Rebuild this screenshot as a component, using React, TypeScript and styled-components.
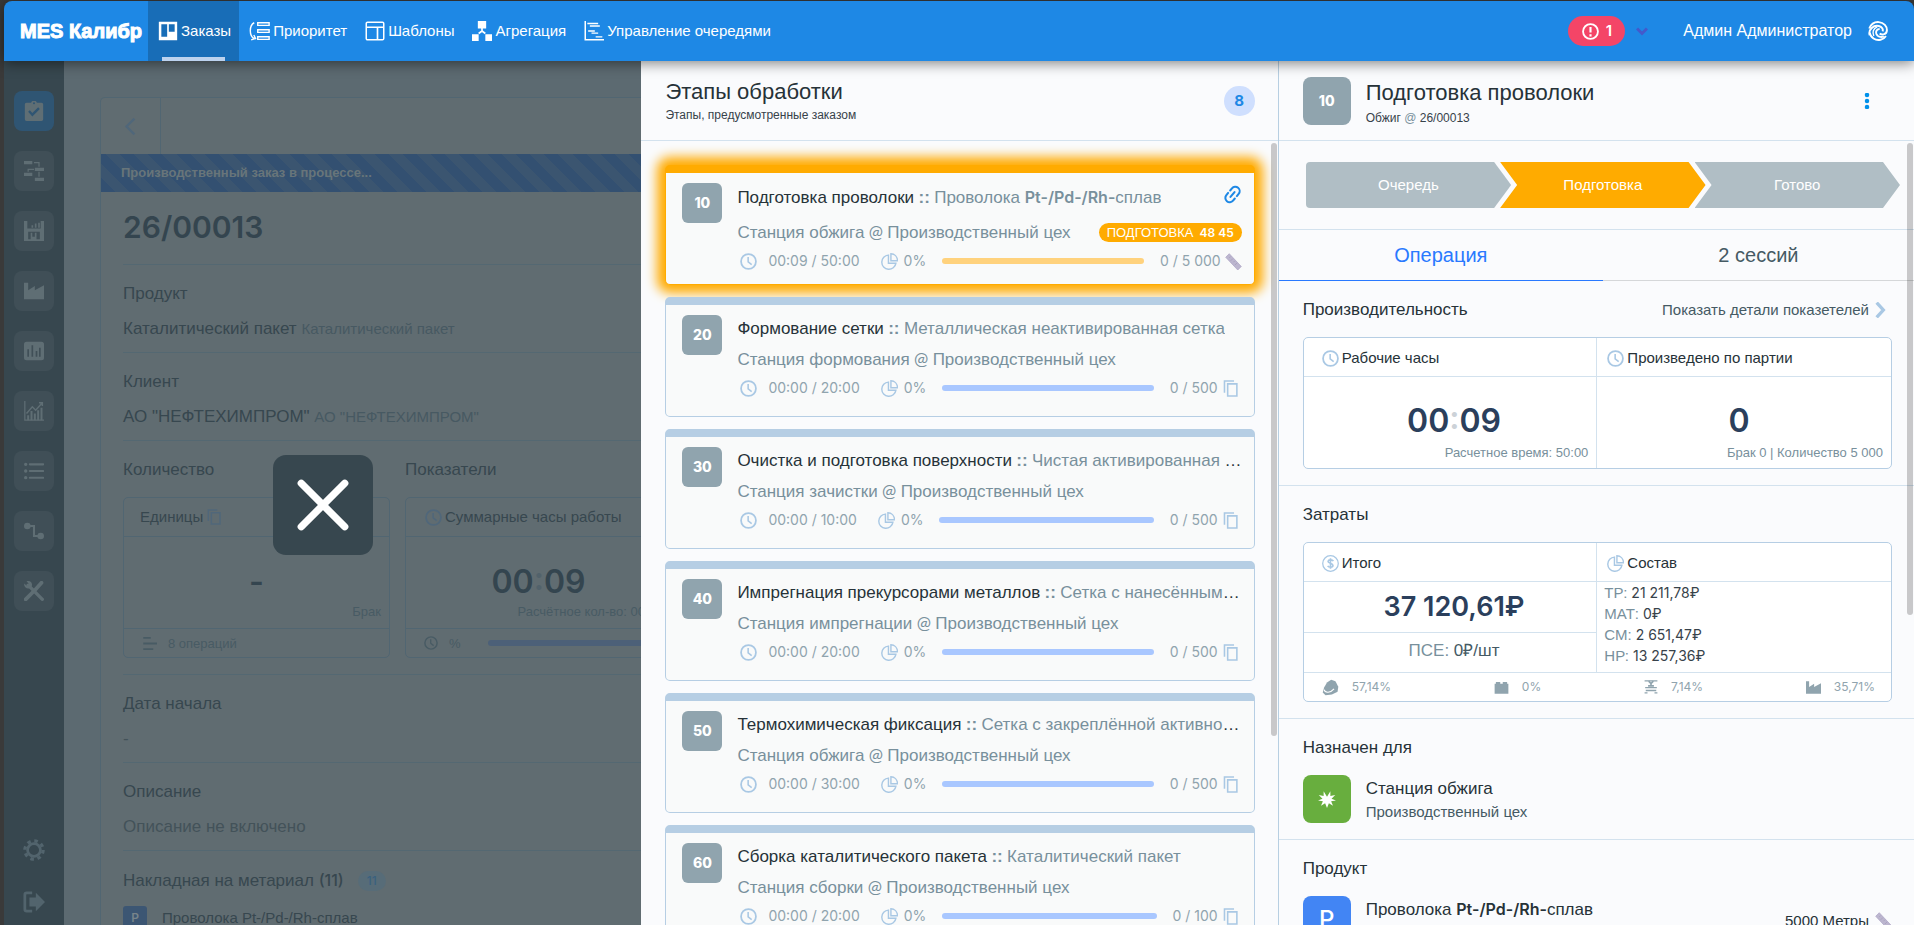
import React from "react";
import styled, { createGlobalStyle, css } from "styled-components";

const SANS = '"Liberation Sans", Arial, sans-serif';
const NUM = 'Inter, "Liberation Sans", sans-serif';

const GlobalStyle = createGlobalStyle`
  *, *::before, *::after { box-sizing: border-box; }
  html, body { margin: 0; height: 100%; }
  body { background: #3a3a3a; font-family: ${SANS}; color: #263238; overflow: hidden; }
  h1, h2, h3, p, ul, dl, dd { margin: 0; padding: 0; }
  h1, h2, h3 { font-weight: 400; }
  ul { list-style: none; }
  button { font-family: inherit; padding: 0; border: 0; background: none; color: inherit; cursor: pointer; }
  a { color: inherit; text-decoration: none; }
  svg { display: block; flex: none; }
`;

/* ---------- icons ---------- */

type IconProps = { size?: number; color?: string };

const Svg = ({ size = 20, color = "currentColor", children }: IconProps & { children: React.ReactNode }) => (
  <svg width={size} height={size} viewBox="0 0 24 24" fill="none" stroke={color} strokeWidth="2" aria-hidden="true">
    {children}
  </svg>
);

const solid = (color?: string) => ({ fill: color ?? "currentColor", stroke: "none" });

const BoardIcon = ({ size, color }: IconProps) => (
  <Svg size={size} color={color}>
    <path
      {...solid(color)}
      fillRule="evenodd"
      d="M1 1h22v22H1zM4 4v15h7V4zM13 4v9h7V4z"
    />
  </Svg>
);
const PriorityIcon = ({ size, color }: IconProps) => (
  <Svg size={size} color={color}>
    <path d="M10 2h13v3H10zM10 10h13v3H10zM10 18h13v3H10z" strokeWidth="1.6" />
    <path d="M6 2C0 5 0 17 6 20M2.500 21.500l5-1.500-2-4" strokeWidth="1.6" />
  </Svg>
);
const TemplateIcon = ({ size, color }: IconProps) => (
  <Svg size={size} color={color}>
    <rect x="1.500" y="1.500" width="21" height="21" rx="1.500" strokeWidth="1.8" />
    <path d="M2 7.500h20M15 7.500v15" strokeWidth="2" />
  </Svg>
);
const AggregationIcon = ({ size, color }: IconProps) => (
  <Svg size={size} color={color}>
    <path {...solid(color)} d="M7 0h10v9H7zM0 16h8v8H0zM16 16h8v8h-8z" />
    <path d="M12 8v4L8 15M12 12l4 3" strokeWidth="2" />
  </Svg>
);
const GanttIcon = ({ size, color }: IconProps) => (
  <Svg size={size} color={color}>
    <path d="M1.500 0v22.500H24" strokeWidth="1.8" />
    <path d="M4 3h13M7 6h12M5 12h8M9 14.500h8M14 19h8" strokeWidth="1.6" />
  </Svg>
);
const AlertIcon = ({ size, color }: IconProps) => (
  <Svg size={size} color={color}>
    <circle cx="12" cy="12" r="10.500" strokeWidth="2.600" />
    <path d="M12 5.500v8M12 16v3" strokeWidth="3" />
  </Svg>
);
const SwirlIcon = ({ size, color }: IconProps) => (
  <Svg size={size} color={color}>
    <path d="M1.500 9C4 3 9 1 13 1.300c6 .5 10 5 9.700 10C22.500 16 17 17.500 14 15" strokeWidth="2.300" />
    <path d="M2 17C0 10 7 4.500 13 6c4 1 5.500 4 4.500 6.500" strokeWidth="2.300" />
    <path d="M2 14c1 6 7 10 13 8.500 3-.7 5-2 6.500-4.500" strokeWidth="2.300" />
    <path d="M14 9.500c-3.500 0-5 3-4 6 1.200 3 5 4.500 9 3" strokeWidth="2.300" />
    <path d="M11 7C6 9 5 14 7 18" strokeWidth="1.600" />
  </Svg>
);
const ChevronDownIcon = ({ size, color }: IconProps) => (
  <Svg size={size} color={color}>
    <path d="M2 7l10 10L22 7" strokeWidth="6" />
  </Svg>
);
const ClipboardIcon = ({ size, color }: IconProps) => (
  <Svg size={size} color={color}>
    <path
      {...solid(color)}
      fillRule="evenodd"
      d="M3 2h5.500a3.700 3.700 0 0 1 7 0H21a2 2 0 0 1 2 2v18a2 2 0 0 1-2 2H3a2 2 0 0 1-2-2V4a2 2 0 0 1 2-2zM12 1.500a1.200 1.200 0 1 0 0 2.400 1.200 1.200 0 0 0 0-2.400zM5 13l5 5.500 9-9-2-2-7 7-3-3.500z"
    />
  </Svg>
);
const FlowIcon = ({ size, color }: IconProps) => (
  <Svg size={size} color={color}>
    <path {...solid(color)} d="M0 0h10v4H0zM13 8h11v4H13zM0 14h10v4H0zM13 20h11v4H13z" />
    <path d="M12 2h6v5M12 10H5v3M18 13v6" strokeWidth="1.500" />
  </Svg>
);
const SaveIcon = ({ size, color }: IconProps) => (
  <Svg size={size} color={color}>
    <path
      {...solid(color)}
      fillRule="evenodd"
      d="M0 0h4v9h16V0h4v24H0zM5 13v9h14v-9zM9 8V5h2v3zM13 8V3h2v5zM17 8V2h2v6zM8 14h2v5h3v-5h2v8H8z"
    />
  </Svg>
);
const FactoryIcon = ({ size, color }: IconProps) => (
  <Svg size={size} color={color}>
    <path {...solid(color)} d="M0 2h5v9l8-5v5l11-6v17H0z" />
  </Svg>
);
const ChartBoxIcon = ({ size, color }: IconProps) => (
  <Svg size={size} color={color}>
    <path
      {...solid(color)}
      fillRule="evenodd"
      d="M3 1h18a3 3 0 0 1 3 3v16a3 3 0 0 1-3 3H3a3 3 0 0 1-3-3V4a3 3 0 0 1 3-3zM4 10v9h2v-9zM9 5v14h2V5zM14 12v7h2v-7zM18 8v11h2V8z"
    />
  </Svg>
);
const TrendIcon = ({ size, color }: IconProps) => (
  <Svg size={size} color={color}>
    <path d="M1 0v23h23" strokeWidth="1.500" />
    <path d="M3 15l7-8 4 4 8-9M18 2h4v4" strokeWidth="1.800" />
    <path d="M5 23v-6M9 23V12M13 23v-8M17 23V11M21 23V8" strokeWidth="2.400" />
  </Svg>
);
const ListIcon = ({ size, color }: IconProps) => (
  <Svg size={size} color={color}>
    <path d="M7 4h16M7 12h16M7 20h16" strokeWidth="2.500" strokeLinecap="round" />
    <path d="M2 4h.1M2 12h.1M2 20h.1" strokeWidth="4" strokeLinecap="round" />
  </Svg>
);
const RouteIcon = ({ size, color }: IconProps) => (
  <Svg size={size} color={color}>
    <path d="M4 6h8v12h8" strokeWidth="2.500" />
    <circle cx="4" cy="6" r="4" {...solid(color)} />
    <circle cx="20" cy="18" r="4" {...solid(color)} />
  </Svg>
);
const ToolsIcon = ({ size, color }: IconProps) => (
  <Svg size={size} color={color}>
    <path d="M5 5l17 17" strokeWidth="4" strokeLinecap="round" />
    <path d="M2 22L15 9M13 11l8-9" strokeWidth="4.500" strokeLinecap="round" />
    <path {...solid(color)} d="M0 3l4 3 2-2-3-4c5-1 8 3 6 7-3 4-9 2-9-4z" />
  </Svg>
);
const GearIcon = ({ size, color }: IconProps) => (
  <Svg size={size} color={color}>
    <circle cx="12" cy="12" r="7" strokeWidth="3" />
    <circle cx="12" cy="12" r="10" strokeWidth="3.500" strokeDasharray="3.900 3.954" />
  </Svg>
);
const ExitIcon = ({ size, color }: IconProps) => (
  <Svg size={size} color={color}>
    <path d="M10 2H4a2 2 0 0 0-2 2v16a2 2 0 0 0 2 2h6" strokeWidth="3" />
    <path {...solid(color)} d="M7 7h7V2l10 10-10 10v-5H7z" />
  </Svg>
);
const BackIcon = ({ size, color }: IconProps) => (
  <Svg size={size} color={color}>
    <path d="M17 2L7 12l10 10" strokeWidth="3" />
  </Svg>
);
const CopyIcon = ({ size, color }: IconProps) => (
  <Svg size={size} color={color}>
    <path d="M8 5.500h13v17H8z" strokeWidth="2.200" />
    <path d="M3.500 18V1.500H17" strokeWidth="2.200" />
  </Svg>
);
const ClockIcon = ({ size, color }: IconProps) => (
  <Svg size={size} color={color}>
    <circle cx="12" cy="12" r="10.500" strokeWidth="2.500" />
    <path d="M11.500 5.500v7l5 4" strokeWidth="2.200" />
  </Svg>
);
const PieIcon = ({ size, color }: IconProps) => (
  <Svg size={size} color={color}>
    <path d="M10.500 3A10 10 0 1 0 21 14.500H10.500z" strokeWidth="2" />
    <path d="M14 1v10h9.500C23 5 19 1 14 1z" strokeWidth="2" />
  </Svg>
);
const CoinIcon = ({ size, color }: IconProps) => (
  <Svg size={size} color={color}>
    <circle cx="12" cy="12" r="11" strokeWidth="1.800" />
    <path d="M16 8.500C15 6.500 9 6 8.500 9c-.3 3 7 2.500 7 5.800 0 3.200-6 3-7.500.5M12 4.500v15" strokeWidth="2.300" />
  </Svg>
);
const LinesIcon = ({ size, color }: IconProps) => (
  <Svg size={size} color={color}>
    <path d="M2 3h12M2 12h22M2 21h16" strokeWidth="3" />
  </Svg>
);
const RulerIcon = ({ size }: IconProps) => (
  <Svg size={size}>
    <path d="M6 1l17 18-5 5L1 6z" fill="#bcb6cf" stroke="#aca3c4" strokeWidth="1" />
    <path d="M8 5l-2 2M11 8l-3 3M14 11l-2 2M17 14l-3 3" stroke="#a49cba" strokeWidth="1" />
  </Svg>
);
const LinkIcon = ({ size, color }: IconProps) => (
  <Svg size={size} color={color}>
    <g transform="rotate(-50 12 12)" strokeWidth="2.600" strokeLinecap="round">
      <path d="M10 6.500H6.500a5.500 5.500 0 0 0 0 11H10M14 6.500h3.500a5.500 5.500 0 0 1 0 11H14M8 12h8" />
    </g>
  </Svg>
);
const CloseIcon = ({ size, color }: IconProps) => (
  <Svg size={size} color={color}>
    <path d="M3 3l18 18M21 3L3 21" strokeWidth="3" strokeLinecap="round" />
  </Svg>
);
const DotsIcon = ({ size, color }: IconProps) => (
  <Svg size={size} color={color}>
    <g {...solid(color)}>
      <circle cx="12" cy="3" r="3.400" />
      <circle cx="12" cy="12" r="3.400" />
      <circle cx="12" cy="21" r="3.400" />
    </g>
  </Svg>
);
const ForwardIcon = ({ size, color }: IconProps) => (
  <Svg size={size} color={color}>
    <path d="M7 1l10 11L7 23" strokeWidth="5" />
  </Svg>
);
const OreIcon = ({ size, color }: IconProps) => (
  <Svg size={size} color={color}>
    <path {...solid(color)} d="M7 5l6-4 6 2 4 8-1 7-8 4-9 1-4-4 2-7z" />
    <path d="M3 15c1 5 9 5 14-1" stroke="#fff" strokeWidth="1.500" />
  </Svg>
);
const BrickIcon = ({ size, color }: IconProps) => (
  <Svg size={size} color={color}>
    <path {...solid(color)} d="M1 6h2V3h7v3h4V3h7v3h2v16H1z" />
  </Svg>
);
const MachineIcon = ({ size, color }: IconProps) => (
  <Svg size={size} color={color}>
    <path d="M1 1.500h22M2 13h20M1 22h5M18 22h5" strokeWidth="2.400" />
    <path d="M8 2l4 4 4-4M12 5v5M7 10h10M3 18h18" strokeWidth="2.800" />
  </Svg>
);
const BurstIcon = ({ size, color }: IconProps) => (
  <Svg size={size} color={color}>
    <path
      {...solid(color)}
      d="M12 9L16.500 1.500 16.500 8 23 6.500 18 11.500 24 14 17.500 15 20 21 14.500 17.500 12 24 9.500 17.500 4 21 6.500 15 0 14 6 11.500 1 6.500 7.500 8 7.500 1.500z"
    />
  </Svg>
);

/* ---------- shell ---------- */

const Shell = styled.div`
  position: relative;
  display: flex;
  flex-direction: column;
  height: 100vh;
  margin-left: 4px;
  padding-top: 1px;
`;

const TopBar = styled.header`
  position: relative;
  z-index: 3;
  flex: none;
  display: flex;
  height: 60px;
  color: #fff;
  background: #1e88e5;
  border-radius: 8px 8px 0 0;
  box-shadow: 0 2px 14px rgba(0, 0, 0, 0.5);
`;

const Brand = styled.a`
  display: flex;
  align-items: center;
  width: 144px;
  padding-left: 16px;
  font: 700 20px/30px ${SANS};
  white-space: nowrap;
  -webkit-text-stroke: 1px #fff;
`;

const Nav = styled.nav`
  display: flex;
  flex: 1;
`;

const NavLink = styled.a<{ $active?: boolean }>`
  position: relative;
  display: flex;
  align-items: center;
  gap: 3px;
  padding: 0 8px 0 10px;
  font-size: 15px;
  line-height: 20px;
  white-space: nowrap;
  ${(p) =>
    p.$active &&
    css`
      background: #186db7;
      &::after {
        content: "";
        position: absolute;
        left: 14px;
        right: 14px;
        bottom: 0;
        height: 4px;
        background: #bcd2ee;
      }
    `}
`;

const AlertPill = styled.button`
  display: flex;
  align-items: center;
  justify-content: center;
  gap: 7px;
  width: 57px;
  height: 30px;
  border-radius: 15px;
  color: #fff;
  background: #f44567;
  font: 600 15px/20px ${NUM};
`;

const Account = styled.div`
  display: flex;
  align-items: center;
  padding-right: 26px;
  font-size: 16px;
`;

const AlertMenu = styled.button`
  margin: 0 35px 0 11px;
`;

const AccountName = styled.span`
  margin-right: 16px;
`;

const Body = styled.div`
  position: relative;
  flex: 1;
  min-height: 0;
  display: flex;
  background: #5c6a71;
`;

const SideBar = styled.aside`
  flex: none;
  display: flex;
  flex-direction: column;
  align-items: center;
  gap: 20px;
  width: 60px;
  padding: 30px 0 12px;
  background: #37474f;
`;

const SideButton = styled.button<{ $active?: boolean }>`
  display: flex;
  flex: none;
  align-items: center;
  justify-content: center;
  width: 40px;
  height: 40px;
  border-radius: 8px;
  color: #5f6e74;
  background: ${(p) => (p.$active ? "#2f5573" : "#404f57")};
`;

const SideFooter = styled.div`
  display: flex;
  flex-direction: column;
  gap: 30px;
  margin-top: auto;
  color: #52646d;
`;

/* ---------- order page ---------- */

const OrderPage = styled.main`
  flex: 1;
  min-width: 0;
  padding: 36px 36px 0;
  overflow: hidden;
  color: #37474f;
`;

const OrderCard = styled.article`
  min-height: 100%;
  border: 1px solid #516672;
  border-bottom: 0;
  border-radius: 5px 5px 0 0;
  background: #606c71;
`;

const BackButton = styled.button`
  display: flex;
  align-items: center;
  justify-content: center;
  width: 60px;
  height: 56px;
  border-right: 1px solid #516672;
  color: #50677a;
`;

const StatusBar = styled.p`
  padding: 0 20px;
  font: 700 13px/38px ${SANS};
  color: #68757a;
  background: repeating-linear-gradient(45deg, #335071 0 10px, #3b5570 10px 20px);
`;

const OrderNumber = styled.h1`
  padding: 17px 0 19px;
  font: 600 30px/36px ${NUM};
  color: #34454f;
`;

const OrderBody = styled.div`
  padding: 0 22px;
`;

const OrderSection = styled.section`
  padding: 18px 0 12px;
  border-top: 1px solid #546872;
`;

const OrderHeading = styled.h2`
  display: flex;
  align-items: center;
  gap: 14px;
  font-size: 17px;
  line-height: 22px;
`;

const HeadingCount = styled.span`
  font: 500 16px/22px ${NUM};
`;

const OrderValue = styled.p<{ $soft?: boolean }>`
  margin-top: 13px;
  font-size: 17px;
  line-height: 22px;
  color: ${(p) => (p.$soft ? "#435259" : "inherit")};
`;

const Faded = styled.span`
  font-size: 15px;
  color: #475962;
`;

const Indicators = styled.div`
  display: flex;
  gap: 15px;
  padding-bottom: 4px;
`;

const Indicator = styled.div`
  flex: none;
  width: 267px;
`;

const DimCard = styled.div`
  margin-top: 16px;
  border: 1px solid #516672;
  border-radius: 5px;
`;

const DimHead = styled.h3`
  display: flex;
  align-items: center;
  gap: 3px;
  padding: 0 16px;
  font-size: 15px;
  line-height: 38px;
  border-bottom: 1px solid #516672;
  svg:first-child {
    margin-left: 3px;
  }
`;

const DimBody = styled.div`
  padding: 27px 8px 5px;
  text-align: right;
  font-size: 13px;
  line-height: 22px;
  color: #485b64;
`;

const DimFigure = styled.p`
  margin-bottom: 2px;
  font: 600 32px/35px ${NUM};
  color: #34454f;
  text-align: center;
`;

const DimFoot = styled.div`
  display: flex;
  align-items: center;
  gap: 11px;
  height: 29px;
  padding: 0 18px;
  font-size: 13px;
  color: #485b64;
  border-top: 1px solid #516672;
`;

const DimBar = styled.div`
  flex: 1;
  height: 6px;
  margin-left: 16px;
  border-radius: 3px;
  background: #4c6078;
`;

const CountTag = styled.span`
  padding: 0 9px;
  border-radius: 10px;
  font: 500 12px/20px ${NUM};
  color: #3a617f;
  background: #576c78;
`;

const MaterialRow = styled.div`
  display: flex;
  align-items: center;
  gap: 15px;
  margin-top: 14px;
  font-size: 15px;
  line-height: 24px;
`;

const MaterialBadge = styled.span`
  width: 24px;
  border-radius: 3px;
  font: 600 12px/24px ${NUM};
  text-align: center;
  color: #78848a;
  background: #3c5673;
`;

/* ---------- drawer ---------- */

const CloseLayer = styled.div`
  position: absolute;
  inset: 0 66.63% 0 0;
  display: flex;
  align-items: center;
  justify-content: center;
  padding-top: 24px;
`;

const CloseButton = styled.button`
  display: flex;
  align-items: center;
  justify-content: center;
  width: 100px;
  height: 100px;
  border-radius: 13px;
  color: #fff;
  background: #37474f;
`;

const Drawer = styled.div`
  position: absolute;
  inset: 0 0 0 auto;
  width: 66.63%;
  display: grid;
  grid-template-columns: calc(50% + 1px) minmax(0, 1fr);
  background: #fafbfd;
`;

const Column = styled.section`
  position: relative;
  min-width: 0;
  min-height: 0;
  display: flex;
  flex-direction: column;
  &:first-child {
    border-right: 1px solid #b7cfe2;
  }
`;

const ColumnHeader = styled.header`
  flex: none;
  display: flex;
  align-items: center;
  height: 80px;
  padding: 0 23px 0 24px;
  border-bottom: 1px solid #d3e2ee;
`;

const HeaderText = styled.div`
  flex: 1;
  padding-top: 3px;
`;

const DetailTitle = styled.div`
  flex: 1;
  display: grid;
  gap: 2px;
  padding: 6px 0 0 15px;
`;

const ColumnTitle = styled.h2`
  font-size: 22px;
  line-height: 26px;
  color: #263238;
`;

const ColumnSub = styled.p`
  font-size: 12px;
  line-height: 20px;
  color: #37424a;
`;

const Accent = styled.span`
  color: #78909c;
`;

const Total = styled.span`
  width: 31px;
  border-radius: 16px;
  font: 700 15px/30px ${NUM};
  text-align: center;
  color: #1e88e5;
  background: #cfdffe;
`;

const Scroller = styled.div<{ $pad: string }>`
  flex: 1;
  min-height: 0;
  overflow: hidden;
  padding: ${(p) => p.$pad};
`;

const Thumb = styled.span<{ $length: string }>`
  position: absolute;
  z-index: 1;
  top: 82px;
  right: 1px;
  width: 6px;
  height: ${(p) => p.$length};
  border-radius: 3px;
  background: rgba(0, 0, 0, 0.2);
`;

const StageList = styled.ul`
  display: flex;
  flex-direction: column;
  gap: 12px;
`;

const StageCard = styled.li<{ $current?: boolean }>`
  display: flex;
  gap: 15px;
  height: 120px;
  padding: 10px 12px 0 16px;
  border: 1px solid #b6cee4;
  border-top-width: 8px;
  border-radius: 5px;
  background: #f9fafa;
  ${(p) =>
    p.$current &&
    css`
      border-color: #ffab00;
      box-shadow: 0 0 12px 8px #ffab00;
    `}
`;

const NumberBadge = styled.span<{ $large?: boolean; $bg?: string }>`
  flex: none;
  display: flex;
  align-items: center;
  justify-content: center;
  width: ${(p) => (p.$large ? 48 : 40)}px;
  height: ${(p) => (p.$large ? 48 : 40)}px;
  border-radius: ${(p) => (p.$large ? 8 : 6)}px;
  font: 800 14px/20px ${NUM};
  color: #fff;
  background: ${(p) => p.$bg ?? "#90a4ae"};
`;

const StageInfo = styled.div`
  flex: 1;
  min-width: 0;
`;

const StageTitleRow = styled.div<{ $tall?: boolean }>`
  display: flex;
  justify-content: space-between;
  height: ${(p) => (p.$tall ? 38 : 33)}px;
  padding-top: ${(p) => (p.$tall ? 2 : 1)}px;
`;

const StageTitle = styled.h3`
  overflow: hidden;
  font-size: 17px;
  line-height: 24px;
  white-space: nowrap;
  text-overflow: ellipsis;
`;

const StagePlace = styled.p`
  display: flex;
  align-items: center;
  justify-content: space-between;
  font-size: 17px;
  line-height: 22px;
  white-space: pre;
  color: #78909c;
`;

const Lat = styled.span`
  font-family: Lato, ${SANS};
`;

const Strong = styled.strong`
  font-family: ${NUM};
  font-size: 16px;
  font-weight: 600;
`;

const StatePill = styled.span`
  display: flex;
  align-items: center;
  gap: 6px;
  padding: 0 8px;
  border-radius: 10px;
  font-size: 13px;
  line-height: 19px;
  color: #fff;
  background: #ffab00;
`;

const PillCount = styled.span`
  font: 600 12px/19px ${NUM};
`;

const StageMeta = styled.div<{ $current?: boolean }>`
  display: flex;
  align-items: center;
  height: 20px;
  margin-top: 7px;
  margin-right: ${(p) => (p.$current ? 0 : 3)}px;
  padding-left: 3px;
  font: 400 14px/20px ${NUM};
  color: #90a4ae;
  white-space: nowrap;
`;

const MetaTime = styled.span`
  margin: 0 21px 0 11px;
`;

const MetaShare = styled.span`
  margin-left: 6px;
`;

const MetaQty = styled.span`
  margin-right: 4px;
`;

const Progress = styled.div<{ $current?: boolean }>`
  flex: 1;
  height: 6px;
  margin: 0 16px 0 16px;
  border-radius: 3px;
  background: ${(p) => (p.$current ? "#ffd27d" : "#a9c7ff")};
`;

/* ---------- operation details ---------- */

const MenuButton = styled.button`
  padding: 8px;
  margin-right: 8px;
`;

const Steps = styled.ol`
  display: flex;
  margin: 0;
  padding: 21px 14px 21px 27px;
  list-style: none;
`;

const Step = styled.li<{ $first?: boolean; $on?: boolean }>`
  flex: 1;
  margin-left: ${(p) => (p.$first ? 0 : -11)}px;
  font-size: 15px;
  line-height: 46px;
  text-align: center;
  color: #fff;
  background: ${(p) => (p.$on ? "#ffab00" : "#b0bec5")};
  border-radius: ${(p) => (p.$first ? "4px 0 0 4px" : "0")};
  clip-path: ${(p) =>
    p.$first
      ? "polygon(0 0, calc(100% - 17px) 0, 100% 50%, calc(100% - 17px) 100%, 0 100%)"
      : "polygon(0 0, calc(100% - 17px) 0, 100% 50%, calc(100% - 17px) 100%, 0 100%, 17px 50%)"};
`;

const Tabs = styled.div`
  display: flex;
  border-top: 1px solid #d3e2ee;
`;

const Tab = styled.button<{ $on?: boolean }>`
  flex: 1 1 auto;
  height: 51px;
  font-size: 20px;
  line-height: 50px;
  color: ${(p) => (p.$on ? "#2979ff" : "#455a64")};
  border-bottom: 1px solid ${(p) => (p.$on ? "#2979ff" : "#d5d7d9")};
`;

const Block = styled.section`
  padding: 18px 22px 16px 24px;
  border-bottom: 1px solid #d3e2ee;
`;

const BlockHead = styled.div`
  display: flex;
  align-items: center;
  justify-content: space-between;
  margin-bottom: 16px;
  padding-right: 4px;
`;

const BlockTitle = styled.h2`
  font-size: 17px;
  line-height: 22px;
`;

const DetailsLink = styled.a`
  display: flex;
  align-items: center;
  gap: 3px;
  font-size: 15px;
  line-height: 22px;
  color: #455a64;
`;

const Panel = styled.div`
  border: 1px solid #b6cee4;
  border-radius: 5px;
  background: #fff;
`;

const PanelGrid = styled.div`
  display: grid;
  grid-template-columns: calc(50% - 1px) 1fr;
`;

const Cell = styled.div<{ $right?: boolean }>`
  border-left: ${(p) => (p.$right ? "1px solid #d3e2ee" : "0")};
`;

const CellHead = styled.h3<{ $right?: boolean }>`
  display: flex;
  align-items: center;
  gap: 3px;
  padding: 2px 0 0 ${(p) => (p.$right ? 10 : 18)}px;
  font-size: 15px;
  line-height: 36px;
  border-bottom: 1px solid #d3e2ee;
`;

const Figure = styled.p<{ $right?: boolean }>`
  padding: ${(p) => (p.$right ? "26px 10px 0 0" : "26px 0 0 8px")};
  font: 600 32px/36px ${NUM};
  text-align: center;
  color: #2b3f5c;
`;

const FigureDots = styled.span<{ $dim?: boolean }>`
  color: ${(p) => (p.$dim ? "#52626b" : "#ccd2d8")};
`;

const Caption = styled.p`
  padding: 3px 8px 4px;
  font-size: 13px;
  line-height: 22px;
  text-align: right;
  color: #78909c;
`;

const Amount = styled.p`
  padding-left: 8px;
  font: 600 27px/50px ${NUM};
  text-align: center;
  color: #2b3f5c;
`;

const UnitCost = styled.p`
  padding-left: 8px;
  border-top: 1px solid #d3e2ee;
  font-size: 17px;
  line-height: 36px;
  padding-bottom: 3px;
  text-align: center;
  color: #455a64;
`;

const CostList = styled.dl`
  padding: 0 7px;
  font-size: 15px;
  line-height: 21px;
`;

const CostLine = styled.div`
  display: flex;
  gap: 4px;
  dt { color: #78909c; }
  dd {
    font-family: ${NUM};
    font-size: 14px;
    color: #37424a;
  }
`;

const Shares = styled.ul`
  display: flex;
  justify-content: space-between;
  padding: 0 16px 0 18px;
  border-top: 1px solid #d3e2ee;
  font: 400 12px/28px ${NUM};
  color: #90a4ae;
`;

const Share = styled.li`
  display: flex;
  align-items: center;
  gap: 13px;
`;

const Assignee = styled.div`
  display: flex;
  align-items: center;
`;

const AssigneeText = styled.div`
  flex: 1;
  padding: 2px 0 0 15px;
  font-size: 15px;
  line-height: 23px;
  color: #455a64;
`;

const AssigneeName = styled.h3`
  font-size: 17px;
  color: #263238;
`;

const Quantity = styled.span`
  display: flex;
  align-items: center;
  gap: 6px;
  font-size: 15px;
`;

const Initial = styled.span`
  font: 500 24px/30px ${NUM};
`;

/* ---------- data ---------- */

const navItems = [
  { label: "Заказы", icon: <BoardIcon size={20} />, active: true },
  { label: "Приоритет", icon: <PriorityIcon size={21} /> },
  { label: "Шаблоны", icon: <TemplateIcon size={20} /> },
  { label: "Агрегация", icon: <AggregationIcon size={20} /> },
  { label: "Управление очередями", icon: <GanttIcon size={20} /> },
];

const sideItems = [
  { label: "Заказы", icon: <ClipboardIcon />, active: true },
  { label: "Процессы", icon: <FlowIcon /> },
  { label: "Склад", icon: <SaveIcon /> },
  { label: "Производство", icon: <FactoryIcon /> },
  { label: "Отчёты", icon: <ChartBoxIcon /> },
  { label: "Аналитика", icon: <TrendIcon /> },
  { label: "Список", icon: <ListIcon /> },
  { label: "Маршруты", icon: <RouteIcon /> },
  { label: "Инструменты", icon: <ToolsIcon /> },
];

type Stage = {
  no: number;
  name: string;
  product: React.ReactNode;
  station: string;
  time: string;
  qty: string;
  current?: boolean;
};

const wire = (
  <>
    Проволока <Strong>Pt-/Pd-/Rh-</Strong>сплав
  </>
);

const stages: Stage[] = [
  { no: 10, name: "Подготовка проволоки", product: wire, station: "Станция обжига", time: "00:09 / 50:00", qty: "0 / 5 000", current: true },
  { no: 20, name: "Формование сетки", product: "Металлическая неактивированная сетка", station: "Станция формования", time: "00:00 / 20:00", qty: "0 / 500" },
  { no: 30, name: "Очистка и подготовка поверхности", product: "Чистая активированная сетка", station: "Станция зачистки", time: "00:00 / 10:00", qty: "0 / 500" },
  { no: 40, name: "Импрегнация прекурсорами металлов", product: "Сетка с нанесённым покрытием", station: "Станция импрегнации", time: "00:00 / 20:00", qty: "0 / 500" },
  { no: 50, name: "Термохимическая фиксация", product: "Сетка с закреплённой активной фазой", station: "Станция обжига", time: "00:00 / 30:00", qty: "0 / 500" },
  { no: 60, name: "Сборка каталитического пакета", product: "Каталитический пакет", station: "Станция сборки", time: "00:00 / 20:00", qty: "0 / 100" },
];

const costs = [
  ["ТР:", "21 211,78₽"],
  ["МАТ:", "0₽"],
  ["СМ:", "2 651,47₽"],
  ["НР:", "13 257,36₽"],
];

const shares = [
  { icon: <OreIcon size={17} />, value: "57,14%" },
  { icon: <BrickIcon size={15} />, value: "0%" },
  { icon: <MachineIcon size={14} />, value: "7,14%" },
  { icon: <FactoryIcon size={15} />, value: "35,71%" },
];

const PALE = "#a9c8e4";

function StageItem({ stage }: { stage: Stage }) {
  return (
    <StageCard $current={stage.current}>
      <NumberBadge>{stage.no}</NumberBadge>
      <StageInfo>
        <StageTitleRow $tall={stage.current}>
          <StageTitle>
            {stage.name}
            <Lat> </Lat>
            <Accent>
              <b>::</b>
              <Lat> </Lat>
              {stage.product}
            </Accent>
          </StageTitle>
          {stage.current && <LinkIcon size={19} color="#1e88e5" />}
        </StageTitleRow>
        <StagePlace>
          <span>
            {stage.station}
            <Lat> @ </Lat>Производственный цех
          </span>
          {stage.current && (
            <StatePill>
              ПОДГОТОВКА
              <PillCount>48 45</PillCount>
            </StatePill>
          )}
        </StagePlace>
        <StageMeta $current={stage.current}>
          <ClockIcon size={17} color={PALE} />
          <MetaTime>{stage.time}</MetaTime>
          <PieIcon size={17} color={PALE} />
          <MetaShare>0%</MetaShare>
          <Progress $current={stage.current} role="progressbar" aria-valuenow={0} aria-label={stage.name} />
          <MetaQty>{stage.qty}</MetaQty>
          {stage.current ? <RulerIcon size={17} /> : <CopyIcon size={17} color={PALE} />}
        </StageMeta>
      </StageInfo>
    </StageCard>
  );
}

function Order() {
  return (
    <OrderPage>
      <OrderCard>
        <BackButton aria-label="Назад">
          <BackIcon size={19} />
        </BackButton>
        <StatusBar>Производственный заказ в процессе...</StatusBar>
        <OrderBody>
          <OrderNumber>26/00013</OrderNumber>
          <OrderSection>
            <OrderHeading>Продукт</OrderHeading>
            <OrderValue>
              Каталитический пакет <Faded>Каталитический пакет</Faded>
            </OrderValue>
          </OrderSection>
          <OrderSection>
            <OrderHeading>Клиент</OrderHeading>
            <OrderValue>
              АО "НЕФТЕХИМПРОМ" <Faded>АО "НЕФТЕХИМПРОМ"</Faded>
            </OrderValue>
          </OrderSection>
          <OrderSection>
            <Indicators>
              <Indicator>
                <OrderHeading>Количество</OrderHeading>
                <DimCard>
                  <DimHead>
                    <span>Единицы</span>
                    <CopyIcon size={16} color="#50677a" />
                  </DimHead>
                  <DimBody>
                    <DimFigure>-</DimFigure>
                    Брак
                  </DimBody>
                  <DimFoot>
                    <LinesIcon size={15} />8 операций
                  </DimFoot>
                </DimCard>
              </Indicator>
              <Indicator>
                <OrderHeading>Показатели</OrderHeading>
                <DimCard>
                  <DimHead>
                    <ClockIcon size={17} color="#50677a" />
                    Суммарные часы работы
                  </DimHead>
                  <DimBody>
                    <DimFigure>
                      00<FigureDots $dim>:</FigureDots>09
                    </DimFigure>
                    Расчётное кол-во: 00:00
                  </DimBody>
                  <DimFoot>
                    <ClockIcon size={14} />
                    <span>%</span>
                    <DimBar />
                  </DimFoot>
                </DimCard>
              </Indicator>
            </Indicators>
          </OrderSection>
          <OrderSection>
            <OrderHeading>Дата начала</OrderHeading>
            <OrderValue $soft>-</OrderValue>
          </OrderSection>
          <OrderSection>
            <OrderHeading>Описание</OrderHeading>
            <OrderValue $soft>Описание не включено</OrderValue>
          </OrderSection>
          <OrderSection>
            <OrderHeading>
              <span>
                Накладная на метариал <HeadingCount>(11)</HeadingCount>
              </span>
              <CountTag>11</CountTag>
            </OrderHeading>
            <MaterialRow>
              <MaterialBadge>P</MaterialBadge>
              Проволока Pt-/Pd-/Rh-сплав
            </MaterialRow>
          </OrderSection>
        </OrderBody>
      </OrderCard>
    </OrderPage>
  );
}

function Details() {
  return (
    <Column>
      <ColumnHeader>
        <NumberBadge $large>10</NumberBadge>
        <DetailTitle>
          <ColumnTitle>Подготовка проволоки</ColumnTitle>
          <ColumnSub>
            Обжиг <Accent>@</Accent> 26/00013
          </ColumnSub>
        </DetailTitle>
        <MenuButton aria-label="Меню">
          <DotsIcon size={16} color="#0091ea" />
        </MenuButton>
      </ColumnHeader>
      <Thumb $length="calc(60% - 46px)" />
      <Scroller $pad="0">
        <Steps>
          <Step $first>Очередь</Step>
          <Step $on>Подготовка</Step>
          <Step>Готово</Step>
        </Steps>
        <Tabs role="tablist">
          <Tab role="tab" aria-selected $on>
            Операция
          </Tab>
          <Tab role="tab" aria-selected={false}>
            2 сессий
          </Tab>
        </Tabs>
        <Block>
          <BlockHead>
            <BlockTitle>Производительность</BlockTitle>
            <DetailsLink href="#metrics">
              Показать детали показетелей <ForwardIcon size={16} color={PALE} />
            </DetailsLink>
          </BlockHead>
          <Panel>
            <PanelGrid>
              <Cell>
                <CellHead>
                  <ClockIcon size={17} color={PALE} />
                  Рабочие часы
                </CellHead>
                <Figure>
                  00<FigureDots>:</FigureDots>09
                </Figure>
                <Caption>Расчетное время: 50:00</Caption>
              </Cell>
              <Cell $right>
                <CellHead $right>
                  <ClockIcon size={17} color={PALE} />
                  Произведено по партии
                </CellHead>
                <Figure $right>0</Figure>
                <Caption>Брак 0 | Количество 5 000</Caption>
              </Cell>
            </PanelGrid>
          </Panel>
        </Block>
        <Block>
          <BlockHead>
            <BlockTitle>Затраты</BlockTitle>
          </BlockHead>
          <Panel>
            <PanelGrid>
              <Cell>
                <CellHead>
                  <CoinIcon size={17} color={PALE} />
                  Итого
                </CellHead>
                <Amount>37 120,61₽</Amount>
                <UnitCost>
                  <Accent>ПСЕ:</Accent> 0₽/шт
                </UnitCost>
              </Cell>
              <Cell $right>
                <CellHead $right>
                  <PieIcon size={17} color={PALE} />
                  Состав
                </CellHead>
                <CostList>
                  {costs.map(([name, value]) => (
                    <CostLine key={name}>
                      <dt>{name}</dt>
                      <dd>{value}</dd>
                    </CostLine>
                  ))}
                </CostList>
              </Cell>
            </PanelGrid>
            <Shares>
              {shares.map((s) => (
                <Share key={s.value}>
                  {s.icon}
                  {s.value}
                </Share>
              ))}
            </Shares>
          </Panel>
        </Block>
        <Block>
          <BlockHead>
            <BlockTitle>Назначен для</BlockTitle>
          </BlockHead>
          <Assignee>
            <NumberBadge $large $bg="#68ae3e">
              <BurstIcon size={18} />
            </NumberBadge>
            <AssigneeText>
              <AssigneeName>Станция обжига</AssigneeName>
              Производственный цех
            </AssigneeText>
          </Assignee>
        </Block>
        <Block>
          <BlockHead>
            <BlockTitle>Продукт</BlockTitle>
          </BlockHead>
          <Assignee>
            <NumberBadge $large $bg="#4285f4">
              <Initial>P</Initial>
            </NumberBadge>
            <AssigneeText>
              <AssigneeName>{wire}</AssigneeName>
              &nbsp;
            </AssigneeText>
            <Quantity>
              5000 Метры <RulerIcon size={17} />
            </Quantity>
          </Assignee>
        </Block>
      </Scroller>
    </Column>
  );
}

export default function App() {
  return (
    <>
      <GlobalStyle />
      <Shell>
        <TopBar>
          <Brand href="#home">MES Калибр</Brand>
          <Nav>
            {navItems.map((item) => (
              <NavLink key={item.label} href="#nav" $active={item.active}>
                {item.icon}
                {item.label}
              </NavLink>
            ))}
          </Nav>
          <Account>
            <AlertPill>
              <AlertIcon size={17} />1
            </AlertPill>
            <AlertMenu aria-label="Уведомления">
              <ChevronDownIcon size={12} color="#4459cb" />
            </AlertMenu>
            <AccountName>Админ Администратор</AccountName>
            <SwirlIcon size={20} />
          </Account>
        </TopBar>
        <Body>
          <SideBar>
            {sideItems.map((item) => (
              <SideButton key={item.label} aria-label={item.label} $active={item.active}>
                {item.icon}
              </SideButton>
            ))}
            <SideFooter>
              <button aria-label="Настройки">
                <GearIcon size={22} />
              </button>
              <button aria-label="Выход">
                <ExitIcon size={22} />
              </button>
            </SideFooter>
          </SideBar>
          <Order />
          <CloseLayer>
            <CloseButton aria-label="Закрыть">
              <CloseIcon size={58} />
            </CloseButton>
          </CloseLayer>
          <Drawer>
            <Column>
              <ColumnHeader>
                <HeaderText>
                  <ColumnTitle>Этапы обработки</ColumnTitle>
                  <ColumnSub>Этапы, предусмотренные заказом</ColumnSub>
                </HeaderText>
                <Total>8</Total>
              </ColumnHeader>
              <Thumb $length="calc(75% - 55px)" />
              <Scroller $pad="24px 23px 0 24px">
                <StageList>
                  {stages.map((stage) => (
                    <StageItem key={stage.no} stage={stage} />
                  ))}
                </StageList>
              </Scroller>
            </Column>
            <Details />
          </Drawer>
        </Body>
      </Shell>
    </>
  );
}
